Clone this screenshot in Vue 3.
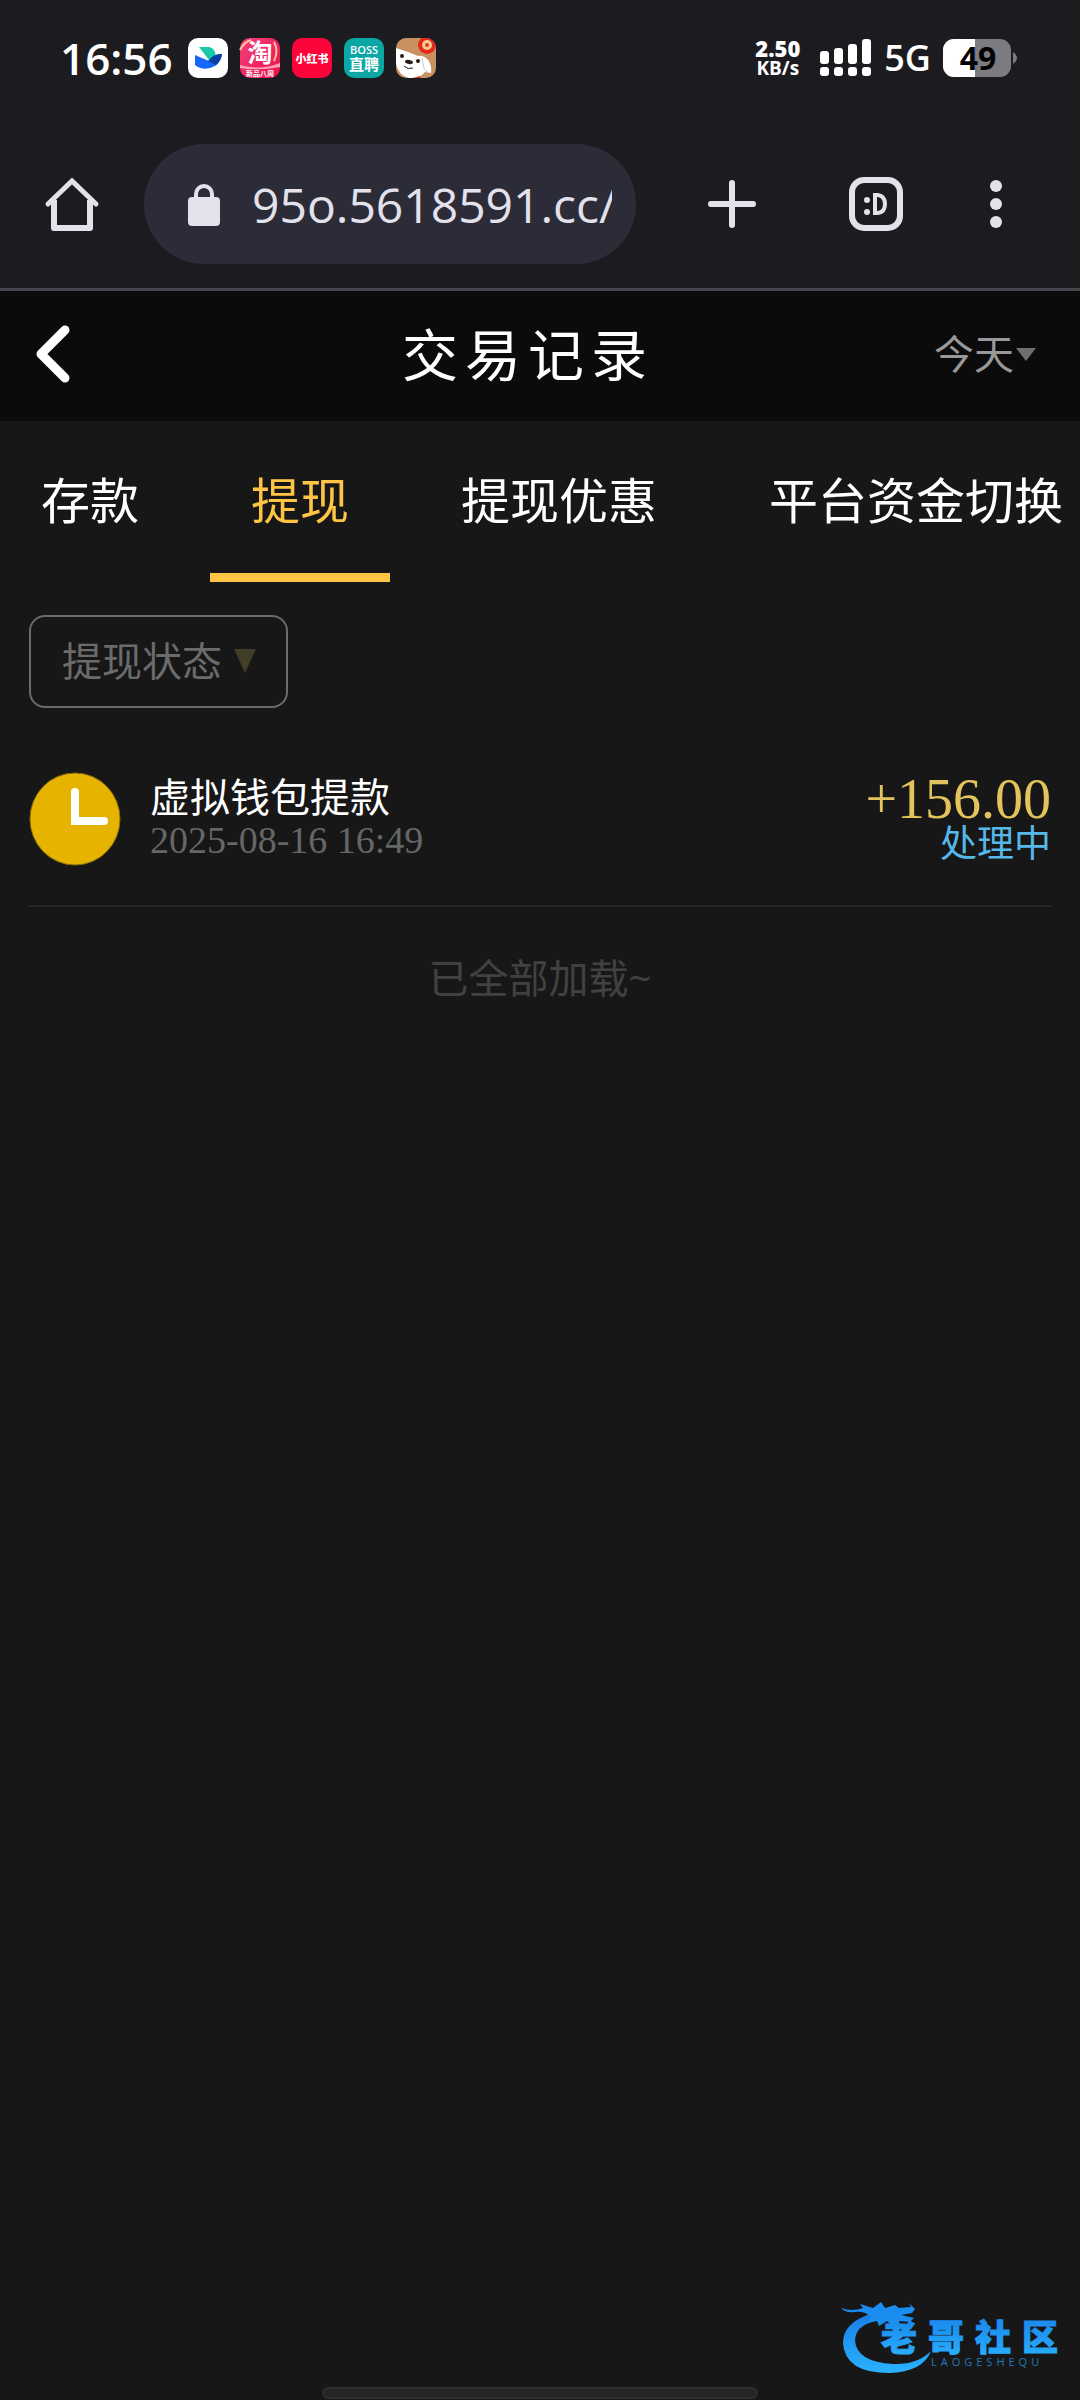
<script setup>
import { ref } from 'vue'

const tabs = ['存款', '提现', '提现优惠', '平台资金切换']
const active = ref('提现')
const day = ref('今天')
const state = ref('提现状态')
const url = ref('95o.5618591.cc/')
const records = [
  { title: '虚拟钱包提款', time: '2025-08-16 16:49', amount: '+156.00', status: '处理中' },
]
</script>

<template>
  <div class="screen">
    <div class="status">
      <div class="status-left">
        <span class="clock">16:56</span>
        <svg class="app" viewBox="0 0 40 40">
          <rect width="40" height="40" rx="10" fill="#fff" />
          <path d="M11 9h10q6 1 7 9l-7 4z" fill="#19c9a5" />
          <path d="M7 17l14 6q6-7 13-7-1 8-7 12-11 6-20-1z" fill="#1668fb" />
          <path d="M20 23q6-8 14-7-1 7-6 11z" fill="#0a3fa6" />
        </svg>
        <svg class="app" viewBox="0 0 40 40">
          <defs>
            <linearGradient id="tao" x1="0" y1="0" x2="1" y2="1">
              <stop offset="0" stop-color="#f2417c" />
              <stop offset="1" stop-color="#ef0f4c" />
            </linearGradient>
          </defs>
          <rect width="40" height="40" rx="10" fill="url(#tao)" />
          <path d="M0 27Q20 33 40 25v4Q20 33 0 30z" fill="#f9a0b4" />
          <path d="M34 4q5 9 0 19" fill="none" stroke="#ffc09a" stroke-width="2" />
          <path d="M0 12Q4 4 11 2" fill="none" stroke="#ffc09a" stroke-width="2" />
          <text x="20" y="24" text-anchor="middle" font-size="25" font-weight="700" fill="#fff">淘</text>
          <text x="20" y="38" text-anchor="middle" font-size="7" font-weight="700" fill="#fff">新品八周</text>
        </svg>
        <svg class="app" viewBox="0 0 40 40">
          <rect width="40" height="40" rx="10" fill="#fc0339" />
          <text x="20" y="25" text-anchor="middle" font-size="11" font-weight="900" fill="#fff">小红书</text>
        </svg>
        <svg class="app" viewBox="0 0 40 40">
          <rect width="40" height="40" rx="10" fill="#0aa7a5" />
          <text x="20" y="16" text-anchor="middle" font-size="11" font-weight="600" fill="#fff">BOSS</text>
          <text x="20" y="32" text-anchor="middle" font-size="15" font-weight="700" fill="#fff">直聘</text>
        </svg>
        <svg class="app" viewBox="0 0 40 40">
          <defs><clipPath id="dog"><rect width="40" height="40" rx="10" /></clipPath></defs>
          <g clip-path="url(#dog)">
            <rect width="40" height="40" fill="#c89160" />
            <path d="M0 10Q10 13 22 18q6-1 11 5 3 6 2 12l-6-1q-4 6-16 6Q3 38 0 26z" fill="#fff" />
            <path d="M26 20l2 10 4 5" fill="none" stroke="#d8c6b8" stroke-width="1" />
            <path d="M4 39q10 3 20-1v2H4z" fill="#e02a20" />
            <ellipse cx="13" cy="24" rx="4" ry="2" fill="#2b1b14" transform="rotate(10 13 24)" />
            <circle cx="6" cy="18" r="2" fill="#2b1b14" />
            <circle cx="22" cy="23" r="2" fill="#2b1b14" />
            <path d="M8 28q4 4 9 2" fill="none" stroke="#2b1b14" />
            <circle cx="31" cy="7" r="9" fill="#e7281c" />
            <circle cx="31" cy="7" r="5" fill="#f8c98c" />
            <circle cx="31" cy="7" r="2" fill="#d9402a" />
          </g>
        </svg>
      </div>
      <div class="status-right">
        <div class="speed"><b>2.50</b><span>KB/s</span></div>
        <svg class="signal" width="52" height="38" viewBox="0 0 52 38" fill="#fff">
          <rect x="0" y="12" width="9" height="13" rx="3" /><rect x="0" y="28" width="9" height="9" rx="3" />
          <rect x="14" y="9" width="9" height="16" rx="3" /><rect x="14" y="28" width="9" height="9" rx="3" />
          <rect x="28" y="5" width="9" height="20" rx="3" /><rect x="28" y="28" width="9" height="9" rx="3" />
          <rect x="42" y="0" width="9" height="25" rx="3" /><rect x="42" y="28" width="9" height="9" rx="3" />
        </svg>
        <span class="net">5G</span>
        <svg class="battery" width="74" height="38" viewBox="0 0 74 38">
          <rect width="68" height="38" rx="11" fill="#7b7b80" />
          <path d="M11 0H32V38H11A11 11 0 0 1 0 27V11A11 11 0 0 1 11 0z" fill="#fff" />
          <path d="M70 13q8 6 0 12z" fill="#7b7b80" />
          <text x="35" y="31" text-anchor="middle" font-size="32" font-weight="700" fill="#000">49</text>
        </svg>
      </div>
    </div>

    <div class="toolbar">
      <button class="icon home" aria-label="Home">
        <svg width="54" height="54" viewBox="0 0 54 54" fill="none" stroke="#e3e1e9" stroke-width="6" stroke-linejoin="round">
          <path d="M9 23V51H45V23" />
          <path d="M3 27L27 4L51 27" stroke-linejoin="miter" stroke-linecap="round" stroke-width="5" />
        </svg>
      </button>
      <label class="address">
        <svg width="32" height="43" viewBox="0 0 32 43">
          <rect y="14" width="32" height="29" rx="4" fill="#e3e1ec" />
          <path d="M8 16V11a8 8 0 0 1 16 0V16" fill="none" stroke="#e3e1ec" stroke-width="4" />
        </svg>
        <input v-model="url" type="text" aria-label="Address" />
      </label>
      <div class="actions">
        <button class="icon" aria-label="New tab">
          <svg width="54" height="48" viewBox="0 0 54 48" stroke="#e3e1e9" stroke-width="6" stroke-linecap="round">
            <path d="M24 3V45M3 24H45" />
          </svg>
        </button>
        <button class="icon" aria-label="Tabs">
          <svg width="54" height="54" viewBox="0 0 54 54">
            <rect x="3" y="3" width="48" height="48" rx="12" fill="none" stroke="#e3e1e9" stroke-width="6" />
            <circle cx="18" cy="23" r="3" fill="#e3e1e9" />
            <circle cx="18" cy="35" r="3" fill="#e3e1e9" />
            <path d="M26 18H29Q36 19 36 27T29 36H26Z" fill="none" stroke="#e3e1e9" stroke-width="4" />
          </svg>
        </button>
        <button class="icon" aria-label="Menu">
          <svg width="12" height="48" viewBox="0 0 12 48" fill="#e3e1e9">
            <circle cx="6" cy="6" r="6" /><circle cx="6" cy="24" r="6" /><circle cx="6" cy="42" r="6" />
          </svg>
        </button>
      </div>
    </div>

    <header class="header">
      <button class="back" aria-label="返回">
        <svg width="34" height="58" viewBox="0 0 34 58" fill="none" stroke="#fff" stroke-width="9" stroke-linecap="round" stroke-linejoin="round">
          <path d="M29 5L5 29L29 53" />
        </svg>
      </button>
      <h1>交易记录</h1>
      <label class="day">
        <select v-model="day" aria-label="日期"><option>今天</option></select>
        <svg width="20" height="13" viewBox="0 0 20 13"><path d="M0 0H20L10 13z" fill="#6f6f6f" /></svg>
      </label>
    </header>

    <nav class="tabs">
      <button v-for="t in tabs" :key="t" :class="{ on: t === active }" @click="active = t">{{ t }}</button>
    </nav>

    <main>
      <label class="filter">
        <select v-model="state" aria-label="提现状态"><option>提现状态</option></select>
        <svg width="22" height="24" viewBox="0 0 22 24"><path d="M0 0H22L11 24z" fill="#423d27" /></svg>
      </label>

      <ul>
        <li v-for="r in records" :key="r.time">
          <svg width="92" height="94" viewBox="0 0 92 94">
            <ellipse cx="46" cy="47" rx="45" ry="46" fill="#e6b301" stroke="#8a6c08" />
            <path d="M46 20V49H75" fill="none" stroke="#fff" stroke-width="8" stroke-linecap="round" />
          </svg>
          <div class="info">
            <strong>{{ r.title }}</strong>
            <time>{{ r.time }}</time>
          </div>
          <div class="sum">
            <span class="amount">{{ r.amount }}</span>
            <span class="state">{{ r.status }}</span>
          </div>
        </li>
      </ul>
      <p class="end">已全部加载~</p>
    </main>

    <footer>
      <svg class="brand" width="224" height="80" viewBox="0 0 224 80">
        <defs>
          <linearGradient id="blue" x1="0" y1="0" x2="0" y2="1">
            <stop offset="0" stop-color="#167fe8" />
            <stop offset="1" stop-color="#2bb2ff" />
          </linearGradient>
        </defs>
        <path d="M29 15Q2 24 2 44Q4 74 48 74Q82 73 90 52Q76 66 52 65Q16 63 14 42Q14 27 34 22z" fill="url(#blue)" />
        <path d="M0 9Q11 13 22 9L19 5L32 9L40 3L44 9L54 6L58 9L70 8L68 4L74 10L71 14L60 16L73 19L69 23L58 22L50 26L46 22L38 27L36 22L26 24L30 18Q24 12 14 13Q4 14 0 9z" fill="#1b8df0" />
        <text class="brand-name" x="40" y="52">老哥社区</text>
        <text class="brand-sub" x="90" y="67">LAOGESHEQU</text>
      </svg>
      <div class="pill"></div>
    </footer>
  </div>
</template>

<style>
body {
  background: #171717;
}
</style>

<style scoped>
* {
  box-sizing: border-box;
}
.screen {
  min-height: 100vh;
  display: flex;
  flex-direction: column;
  background: #171717;
  color: #fff;
  font-family: "Open Sans", "Noto Sans CJK SC", sans-serif;
}
button,
select,
input {
  font: inherit;
  color: inherit;
  background: none;
  border: 0;
  padding: 0;
  margin: 0;
  outline: 0;
  appearance: none;
}
svg {
  display: block;
  flex: none;
  overflow: visible;
}
.status {
  height: 120px;
  padding: 0 63px 4px 60px;
  background: #1b1b20;
  display: flex;
  align-items: center;
  justify-content: space-between;
}
.status-left {
  display: flex;
  align-items: center;
  gap: 12px;
}
.clock {
  font-size: 44px;
  line-height: 60px;
  font-weight: 600;
  margin-right: 3px;
}
.app {
  width: 40px;
  height: 40px;
}
.status-right {
  display: flex;
  align-items: center;
  gap: 12px;
}
.speed {
  display: flex;
  flex-direction: column;
  align-items: center;
  font-size: 19px;
  line-height: 20px;
  font-weight: 700;
  margin-right: 8px;
}
.speed b {
  font-size: 22px;
}
.net {
  font-size: 36px;
  line-height: 40px;
  font-weight: 600;
}
.toolbar {
  height: 171px;
  padding: 0 78px 0 45px;
  background: #1b1b20;
  border-bottom: 3px solid #46454c;
  display: flex;
  align-items: center;
}
.address {
  flex: 1;
  min-width: 0;
  height: 120px;
  margin: 0 72px 0 45px;
  padding: 0 24px 0 44px;
  border-radius: 60px;
  background: #2b2c38;
  display: flex;
  align-items: center;
  gap: 32px;
  color: #e3e1ec;
}
.address input {
  flex: 1;
  min-width: 0;
  padding-top: 2px;
  font-size: 48px;
  line-height: 72px;
}
.actions {
  display: flex;
  align-items: center;
  gap: 87px;
}
.header {
  height: 130px;
  padding: 0 44px 4px 36px;
  background: #0b0b0b;
  display: flex;
  align-items: center;
  justify-content: space-between;
}
.back {
  width: 86px;
}
h1 {
  margin: 0;
  font-size: 56px;
  line-height: 80px;
  font-weight: 400;
  letter-spacing: 7px;
}
.day {
  display: flex;
  align-items: center;
  gap: 2px;
  font-size: 40px;
  line-height: 60px;
  color: #999;
}
.tabs {
  display: flex;
  gap: 30px;
  overflow: hidden;
}
.tabs button {
  flex: none;
  height: 161px;
  padding: 6px 41px 0;
  border-bottom: 9px solid transparent;
  font-size: 49px;
  line-height: 72px;
  white-space: nowrap;
}
.tabs .on {
  color: #fec443;
  border-color: #fec443;
}
main {
  flex: 1;
  padding: 33px 29px 0;
}
.filter {
  display: inline-flex;
  align-items: center;
  gap: 12px;
  height: 93px;
  padding: 0 30px 2px 31px;
  border: 2px solid #6b6b6b;
  border-radius: 16px;
  font-size: 40px;
  line-height: 60px;
  color: #6b6b6b;
}
ul {
  margin: 0;
  padding: 0;
  list-style: none;
}
li {
  display: flex;
  align-items: center;
  padding: 64px 0 39px;
  border-bottom: 2px solid #252525;
}
.info {
  flex: 1;
  display: flex;
  flex-direction: column;
  padding: 0 0 4px 29px;
}
.info strong {
  font-size: 40px;
  line-height: 46px;
  font-weight: 400;
}
.info time {
  font: 38px/40px "Liberation Serif", serif;
  color: #666;
}
.sum {
  display: flex;
  flex-direction: column;
  align-items: flex-end;
}
.amount {
  font: 56px/48px "Liberation Serif", serif;
  color: #e3c35c;
}
.state {
  font-size: 37px;
  line-height: 40px;
  color: #56b8e8;
}
.end {
  margin: 41px 0;
  text-align: center;
  font-size: 40px;
  line-height: 60px;
  color: #414141;
}
footer {
  display: flex;
  flex-direction: column;
  align-items: center;
  padding-bottom: 1px;
}
.brand {
  align-self: flex-end;
  margin: 0 15px 8px 0;
}
.brand-name {
  font: 900 36px "Noto Sans CJK SC", sans-serif;
  letter-spacing: 11px;
  fill: url(#blue);
  stroke: url(#blue);
  stroke-width: 1px;
}
.brand-sub {
  font: 11px "Open Sans", sans-serif;
  letter-spacing: 4px;
  fill: #2479b8;
}
.pill {
  width: 436px;
  max-width: 60%;
  height: 12px;
  border: 2px solid #2f2f2f;
  border-radius: 6px;
  background: #252525;
}
</style>
